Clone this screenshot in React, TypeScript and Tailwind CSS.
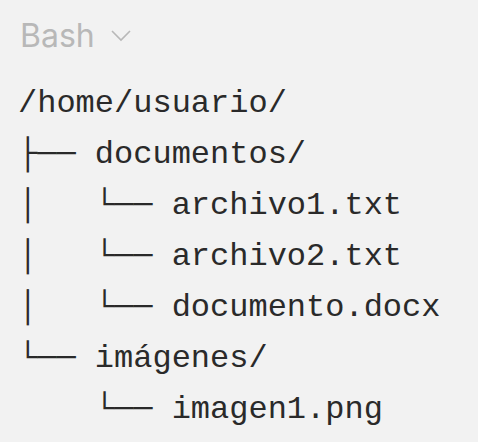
import React from 'react';

const lines: string[] = [
  '/home/usuario/',
  '├── documentos/',
  '│   └── archivo1.txt',
  '│   └── archivo2.txt',
  '│   └── documento.docx',
  '└── imágenes/',
  '    └── imagen1.png',
];

const App: React.FC = () => {
  return (
    <div className="w-[478px] h-[442px] bg-[#f2f2f2] overflow-hidden pl-[18px] pt-[18px]">
      {/* Language label */}
      <div className="flex items-center gap-4 h-[36px] pl-[2px] text-[32px] leading-[36px] text-[#b8b8b8] font-['Inter',sans-serif]">
        <span>Bash</span>
        <svg width="20" height="12" viewBox="0 0 20 12" fill="none">
          <polyline points="1,1 10,10 19,1" stroke="#b8b8b8" strokeWidth="1.6" />
        </svg>
      </div>
      {/* Tree output */}
      <pre className="mt-[24px] text-[32px] leading-[51px] text-[#2a2a2a] font-['Liberation_Mono','DejaVu_Sans_Mono',monospace]">
        {lines.join('\n')}
      </pre>
    </div>
  );
};

export default App;
